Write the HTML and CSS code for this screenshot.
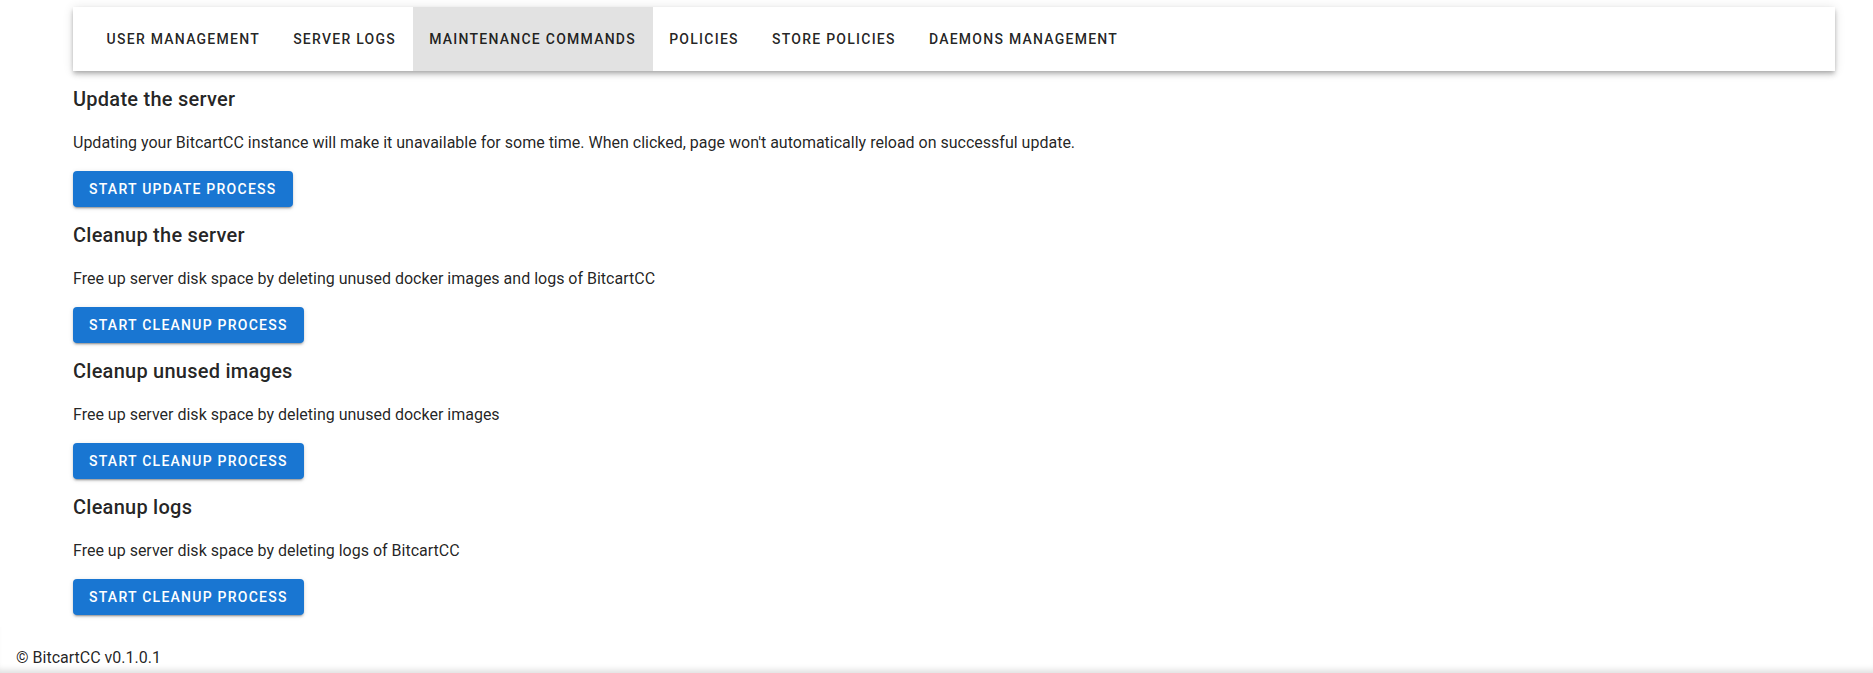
FILE: index.html
```html
<!DOCTYPE html>
<html lang="en">
<head>
<meta charset="utf-8">
<title>BitcartCC Admin</title>
<link rel="stylesheet" href="styles.css">
</head>
<body>
<div class="app">
  <main class="main">
    <nav class="toolbar">
      <div class="tabs">
        <div class="tab">User management</div>
        <div class="tab">Server logs</div>
        <div class="tab tab-active">Maintenance commands</div>
        <div class="tab">Policies</div>
        <div class="tab">Store policies</div>
        <div class="tab">Daemons management</div>
      </div>
    </nav>

    <section class="section">
      <h6 class="title">Update the server</h6>
      <p class="desc">Updating your BitcartCC instance will make it unavailable for some time. When clicked, page won't automatically reload on successful update.</p>
      <button class="btn">Start update process</button>
    </section>

    <section class="section">
      <h6 class="title">Cleanup the server</h6>
      <p class="desc">Free up server disk space by deleting unused docker images and logs of BitcartCC</p>
      <button class="btn">Start cleanup process</button>
    </section>

    <section class="section">
      <h6 class="title">Cleanup unused images</h6>
      <p class="desc">Free up server disk space by deleting unused docker images</p>
      <button class="btn">Start cleanup process</button>
    </section>

    <section class="section">
      <h6 class="title">Cleanup logs</h6>
      <p class="desc">Free up server disk space by deleting logs of BitcartCC</p>
      <button class="btn">Start cleanup process</button>
    </section>
  </main>
  <footer class="footer">© BitcartCC v0.1.0.1</footer>
</div>
</body>
</html>
```

FILE: styles.css
```css
html, body {
  margin: 0;
  padding: 0;
  background: #ffffff;
}

body {
  font-family: Roboto, "Liberation Sans", sans-serif;
  color: rgba(0, 0, 0, 0.87);
  height: 673px;
  overflow: hidden;
}

.app {
  display: flex;
  flex-direction: column;
  height: 673px;
}

.main {
  flex: 1 1 auto;
  padding: 7px 38px 0 73px;
}

.toolbar {
  height: 64px;
  background: #ffffff;
  padding: 0 16px 0 17px;
  box-shadow: 0 2px 4px -1px rgba(0, 0, 0, 0.2), 0 4px 5px 0 rgba(0, 0, 0, 0.14), 0 1px 10px 0 rgba(0, 0, 0, 0.12);
  margin-bottom: 12px;
  display: flex;
}

.tabs {
  display: flex;
  height: 64px;
}

.tab {
  display: flex;
  align-items: center;
  justify-content: center;
  padding: 0 16.6px;
  font-size: 14px;
  font-weight: 500;
  letter-spacing: 0.0892857143em;
  text-transform: uppercase;
  color: rgba(0, 0, 0, 0.87);
  white-space: nowrap;
}

.tab-active {
  background: #e2e2e2;
}

.section {
  display: flex;
  flex-direction: column;
  align-items: flex-start;
  margin-bottom: 12px;
}

.title {
  margin: 0 0 16px;
  font-size: 20px;
  line-height: 32px;
  font-weight: 500;
  letter-spacing: 0.0125em;
  color: rgba(0, 0, 0, 0.87);
}

.desc {
  margin: 0 0 16px;
  font-size: 16px;
  line-height: 24px;
  font-weight: 400;
}

.btn {
  height: 36px;
  min-width: 64px;
  padding: 0 16px;
  border: 0;
  border-radius: 4px;
  background: #1976d2;
  color: #ffffff;
  font-family: Roboto, "Liberation Sans", sans-serif;
  font-size: 14px;
  font-weight: 500;
  letter-spacing: 0.0892857143em;
  text-transform: uppercase;
  box-shadow: 0 3px 1px -2px rgba(0, 0, 0, 0.2), 0 2px 2px 0 rgba(0, 0, 0, 0.14), 0 1px 5px 0 rgba(0, 0, 0, 0.12);
  cursor: pointer;
}

.footer {
  flex: 0 0 auto;
  height: 24px;
  padding: 19px 16px 3px;
  font-size: 16px;
  line-height: 24px;
  color: rgba(0, 0, 0, 0.87);
  box-shadow: inset 0 -7px 6px -4px rgba(0, 0, 0, 0.13);
}
```
